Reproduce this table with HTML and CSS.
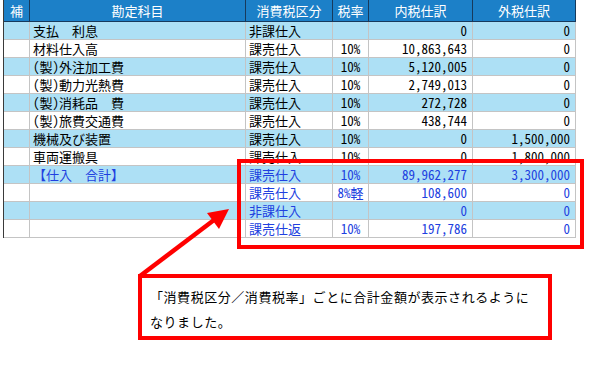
FILE: index.html
```html
<!DOCTYPE html>
<html lang="ja">
<head>
<meta charset="utf-8">
<link rel="stylesheet" href="styles.css">
</head>
<body>
<div class="page">
  <div class="sheet">
    <div class="row head">
      <div class="c">補</div><div class="c">勘定科目</div><div class="c">消費税区分</div><div class="c">税率</div><div class="c">内税仕訳</div><div class="c">外税仕訳</div>
    </div>
    <div class="row alt">
      <div class="c"></div><div class="c l">支払　利息</div><div class="c l">非課仕入</div><div class="c m"></div><div class="c n">0</div><div class="c n">0</div>
    </div>
    <div class="row">
      <div class="c"></div><div class="c l">材料仕入高</div><div class="c l">課売仕入</div><div class="c m">10%</div><div class="c n">10,863,643</div><div class="c n">0</div>
    </div>
    <div class="row alt">
      <div class="c"></div><div class="c l">(製)外注加工費</div><div class="c l">課売仕入</div><div class="c m">10%</div><div class="c n">5,120,005</div><div class="c n">0</div>
    </div>
    <div class="row">
      <div class="c"></div><div class="c l">(製)動力光熱費</div><div class="c l">課売仕入</div><div class="c m">10%</div><div class="c n">2,749,013</div><div class="c n">0</div>
    </div>
    <div class="row alt">
      <div class="c"></div><div class="c l">(製)消耗品　費</div><div class="c l">課売仕入</div><div class="c m">10%</div><div class="c n">272,728</div><div class="c n">0</div>
    </div>
    <div class="row">
      <div class="c"></div><div class="c l">(製)旅費交通費</div><div class="c l">課売仕入</div><div class="c m">10%</div><div class="c n">438,744</div><div class="c n">0</div>
    </div>
    <div class="row alt">
      <div class="c"></div><div class="c l">機械及び装置</div><div class="c l">課売仕入</div><div class="c m">10%</div><div class="c n">0</div><div class="c n">1,500,000</div>
    </div>
    <div class="row">
      <div class="c"></div><div class="c l">車両運搬具</div><div class="c l">課売仕入</div><div class="c m">10%</div><div class="c n">0</div><div class="c n">1,800,000</div>
    </div>
    <div class="row alt total">
      <div class="c"></div><div class="c l">【仕入　合計】</div><div class="c l">課売仕入</div><div class="c m">10%</div><div class="c n">89,962,277</div><div class="c n">3,300,000</div>
    </div>
    <div class="row total">
      <div class="c"></div><div class="c l"></div><div class="c l">課売仕入</div><div class="c m">8%軽</div><div class="c n">108,600</div><div class="c n">0</div>
    </div>
    <div class="row alt total">
      <div class="c"></div><div class="c l"></div><div class="c l">非課仕入</div><div class="c m"></div><div class="c n">0</div><div class="c n">0</div>
    </div>
    <div class="row total">
      <div class="c"></div><div class="c l"></div><div class="c l">課売仕返</div><div class="c m">10%</div><div class="c n">197,786</div><div class="c n">0</div>
    </div>
  </div>
  <div class="callout">「消費税区分／消費税率」ごとに合計金額が表示されるように<br>なりました。</div>
  <div class="highlight"></div>
  <svg class="arrow" width="604" height="369" viewBox="0 0 604 369">
    <line x1="140" y1="276" x2="214" y2="220" stroke="#ff0000" stroke-width="4.5"/>
    <polygon points="229,209 219,229 207,213" fill="#ff0000"/>
  </svg>
</div>
</body>
</html>
```

FILE: styles.css
```css
* { box-sizing: border-box; }
html, body { margin: 0; padding: 0; background: #ffffff; }
body {
  font-family: "Noto Sans Mono CJK JP", "Noto Sans CJK JP", sans-serif;
  font-size: 13px;
  color: #000000;
}
.page {
  position: relative;
  width: 604px;
  height: 369px;
  overflow: hidden;
}
.sheet {
  margin-left: 3px;
  width: 573px;
  border-left: 1px solid #3a3a3a;
}
.row {
  display: grid;
  grid-template-columns: 26px 216px 87px 36px 104px 103px;
  height: 18px;
  background: #ffffff;
}
.row.alt { background: #ade0f5; }
.c {
  border-right: 1px solid #c4c4c4;
  border-bottom: 1px solid #c4c4c4;
  line-height: 17px;
  white-space: nowrap;
  overflow: hidden;
}
.l { padding-left: 3px; }
.m { text-align: center; }
.n { text-align: right; padding-right: 5px; }
.row.head {
  height: 22px;
  background: #1c80c8;
  color: #ffffff;
}
.row.head .c {
  border-right: 1px solid #173a5c;
  border-bottom: 1px solid #173a5c;
  line-height: 21px;
  text-align: center;
}
.row.total { color: #2040e0; }
.callout {
  margin-top: 36px;
  margin-left: 138px;
  width: 414px;
  height: 66px;
  border: 4px solid #ff0000;
  padding: 6px 4px 0 8px;
  line-height: 25px;
  letter-spacing: 0.55px;
  white-space: nowrap;
}
.highlight {
  position: absolute;
  left: 237px;
  top: 159px;
  width: 347px;
  height: 90px;
  border: 4px solid #ff0000;
}
.arrow {
  position: absolute;
  left: 0;
  top: 0;
}
```
